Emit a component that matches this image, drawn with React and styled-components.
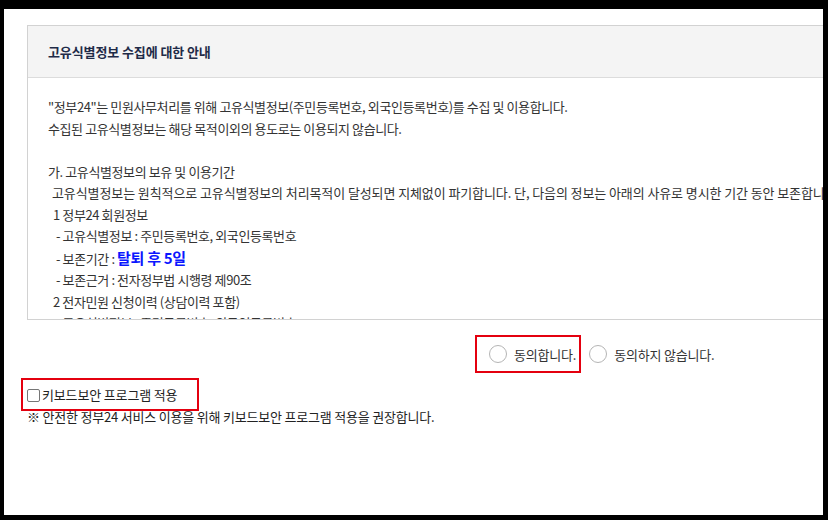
import React from "react";
import styled, { createGlobalStyle } from "styled-components";

const Global = createGlobalStyle`
  html, body { margin: 0; padding: 0; background: #000; }
  body { font-family: "Noto Sans CJK KR", "Noto Sans", sans-serif; color: #333; }
`;

const Frame = styled.div`
  margin: 9px 5px 0 4px;
  height: 506px;
  background: #fff;
  overflow: hidden;
  padding: 16px 0 0 23px;
  box-sizing: border-box;
`;

const Panel = styled.section`
  width: 820px;
  height: 295px;
  border: 1px solid #d2d2d2;
  box-sizing: border-box;
  display: flex;
  flex-direction: column;
`;

const PanelHeader = styled.h2`
  margin: 0;
  height: 51px;
  flex: none;
  background: #f4f4f4;
  border-bottom: 1px solid #dcdcdc;
  display: flex;
  align-items: center;
  padding-left: 20px;
  font-size: 13px;
  font-weight: 700;
  letter-spacing: -0.1px;
  color: #1f2b48;
`;

const PanelBody = styled.div`
  flex: 1;
  overflow: hidden;
  padding: 18px 0 0 20px;
  font-size: 13px;
  line-height: 21.5px;
  letter-spacing: -0.4px;
  color: #333;
  white-space: nowrap;
`;

const Line = styled.div`
  padding-left: ${(p) => p.$indent || 0}px;
  letter-spacing: ${(p) => (p.$wide ? "-0.1px" : "inherit")};
  min-height: 21.5px;
`;

const Strong = styled.strong`
  color: #0a16ff;
  font-size: 15px;
  font-weight: 700;
  letter-spacing: -0.3px;
`;

const RadioRow = styled.div`
  display: flex;
  align-items: center;
  padding-left: 448px;
  margin-top: 15px;
  height: 38px;
`;

const RadioLabel = styled.label`
  display: flex;
  align-items: center;
  gap: 7px;
  height: 38px;
  box-sizing: border-box;
  padding: 0 3px 0 ${(p) => (p.$highlight ? 12 : 6)}px;
  border: 2px solid ${(p) => (p.$highlight ? "#e4000f" : "transparent")};
  font-size: 13px;
  letter-spacing: -0.2px;
  color: #333;
`;

const RadioCircle = styled.span`
  width: 18px;
  height: 18px;
  border-radius: 50%;
  border: 1px solid #b5b5b5;
  box-sizing: border-box;
  background: #fff;
  flex: none;
`;

const CheckLabel = styled.label`
  display: inline-flex;
  align-items: center;
  gap: 2px;
  margin: 5px 0 0 -6px;
  height: 33px;
  width: 178px;
  box-sizing: border-box;
  padding-left: 4px;
  border: 2px solid #e4000f;
  font-size: 13px;
  letter-spacing: -0.15px;
  color: #222;
`;

const CheckBox = styled.span`
  width: 13px;
  height: 13px;
  border: 1px solid #767676;
  border-radius: 2px;
  box-sizing: border-box;
  flex: none;
  margin-top: 2px;
`;

const Note = styled.p`
  margin: -3px 0 0 0;
  font-size: 13px;
  line-height: 18px;
  letter-spacing: -0.2px;
  color: #222;
`;

export default function App() {
  return (
    <>
      <Global />
      <Frame>
        <Panel>
          <PanelHeader>고유식별정보 수집에 대한 안내</PanelHeader>
          <PanelBody>
            <Line>"정부24"는 민원사무처리를 위해 고유식별정보(주민등록번호, 외국인등록번호)를 수집 및 이용합니다.</Line>
            <Line>수집된 고유식별정보는 해당 목적이외의 용도로는 이용되지 않습니다.</Line>
            <Line />
            <Line>가. 고유식별정보의 보유 및 이용기간</Line>
            <Line $indent={4} $wide>고유식별정보는 원칙적으로 고유식별정보의 처리목적이 달성되면 지체없이 파기합니다. 단, 다음의 정보는 아래의 사유로 명시한 기간 동안 보존합니다.</Line>
            <Line $indent={5}>1 정부24 회원정보</Line>
            <Line $indent={8}>- 고유식별정보 : 주민등록번호, 외국인등록번호</Line>
            <Line $indent={8}>- 보존기간 : <Strong>탈퇴 후 5일</Strong></Line>
            <Line $indent={8}>- 보존근거 : 전자정부법 시행령 제90조</Line>
            <Line $indent={5}>2 전자민원 신청이력 (상담이력 포함)</Line>
            <Line $indent={8}>- 고유식별정보 : 주민등록번호, 외국인등록번호</Line>
          </PanelBody>
        </Panel>
        <RadioRow>
          <RadioLabel $highlight>
            <RadioCircle />
            동의합니다.
          </RadioLabel>
          <RadioLabel>
            <RadioCircle />
            동의하지 않습니다.
          </RadioLabel>
        </RadioRow>
        <CheckLabel>
          <CheckBox />
          키보드보안 프로그램 적용
        </CheckLabel>
        <Note>※ 안전한 정부24 서비스 이용을 위해 키보드보안 프로그램 적용을 권장합니다.</Note>
      </Frame>
    </>
  );
}
